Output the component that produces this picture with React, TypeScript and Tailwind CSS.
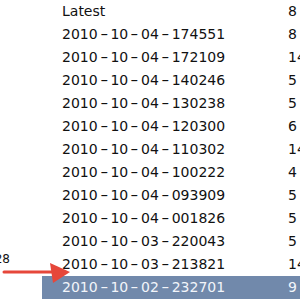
import React from 'react';

const rows = [
  { name: 'Latest', size: '8' },
  { name: '2010-10-04-174551', size: '8' },
  { name: '2010-10-04-172109', size: '14' },
  { name: '2010-10-04-140246', size: '5' },
  { name: '2010-10-04-130238', size: '5' },
  { name: '2010-10-04-120300', size: '6' },
  { name: '2010-10-04-110302', size: '14' },
  { name: '2010-10-04-100222', size: '4' },
  { name: '2010-10-04-093909', size: '5' },
  { name: '2010-10-04-001826', size: '5' },
  { name: '2010-10-03-220043', size: '5' },
  { name: '2010-10-03-213821', size: '14' },
  { name: '2010-10-02-232701', size: '9' },
];

// hyphens in the original font are much wider than DejaVu's
function Stamp({ text }: { text: string }) {
  const parts = text.split('-');
  return (
    <span>
      {parts.map((p, i) => (
        <React.Fragment key={i}>
          {i > 0 && <span className="inline-block w-[12.8px] text-center scale-x-[1.6]">-</span>}
          {p}
        </React.Fragment>
      ))}
    </span>
  );
}

export default function App() {
  const last = rows.length - 1;
  return (
    <div className="relative w-[300px] h-[300px] overflow-hidden bg-white font-['DejaVu_Sans',sans-serif] text-[#111]">
      <div className="flex h-full">
        {/* left column, mostly cut off */}
        <div className="w-[42px] shrink-0 pt-[252px]">
          <div className="w-[10px] overflow-hidden flex justify-end text-[12px] leading-[15px]">
            <span className="whitespace-nowrap">28</span>
          </div>
        </div>

        {/* backups list */}
        <div className="flex-1 min-w-0">
          {rows.map((r, i) => (
            <div
              key={r.name}
              className={`flex h-[23px] items-center text-[14px] whitespace-nowrap ${
                i === last ? 'bg-[#7189ab] text-[#f2f5fa]' : ''
              }`}
            >
              <div className="w-[246px] shrink-0 pl-[20px]">
                <Stamp text={r.name} />
              </div>
              <div className="shrink-0">{r.size}</div>
            </div>
          ))}
        </div>
      </div>

      {/* red pointer arrow */}
      <svg className="absolute left-0 top-[258px]" width="75" height="30" viewBox="0 0 75 30">
        <line x1="4" y1="14" x2="56" y2="14" stroke="#e6473a" strokeWidth="3" strokeLinecap="round" />
        <polygon points="50,5 70,14 53,25" fill="#e6473a" />
      </svg>
    </div>
  );
}
